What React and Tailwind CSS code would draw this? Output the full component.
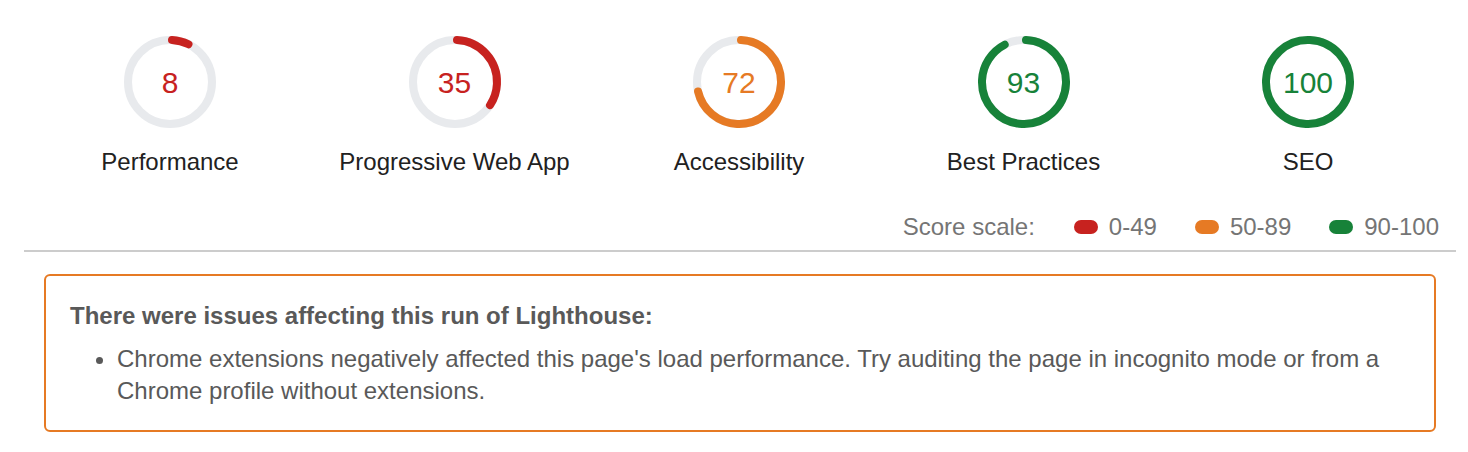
import React from "react";

const RED = "#c7221f";
const ORANGE = "#e67a24";
const GREEN = "#178239";

const gauges = [
  { score: 8, label: "Performance", color: RED },
  { score: 35, label: "Progressive Web App", color: RED },
  { score: 72, label: "Accessibility", color: ORANGE },
  { score: 93, label: "Best Practices", color: GREEN },
  { score: 100, label: "SEO", color: GREEN },
];

function Gauge({ score, label, color }) {
  const r = 42;
  const sw = 8;
  const C = 2 * Math.PI * r;
  const p = score / 100;
  const adj = ((0.25 * sw) / C) * 360;
  let len = p * C - sw / 2;
  if (p === 1) len = C;
  return (
    <div className="flex w-[284.5px] flex-col items-center">
      <div className="relative h-[96px] w-[96px]">
        <svg width="96" height="96" viewBox="0 0 96 96" className="block">
          <circle cx="48" cy="48" r={r} fill="none" stroke="#e8eaed" strokeWidth={sw} />
          <circle
            cx="48"
            cy="48"
            r={r}
            fill="none"
            stroke={color}
            strokeWidth={sw}
            strokeLinecap="round"
            strokeDasharray={`${Math.max(len, 0)} ${C}`}
            transform={`rotate(${-90 + adj} 48 48)`}
          />
        </svg>
        <div
          className="absolute inset-0 flex items-center justify-center pt-[1px] text-[30px] leading-none"
          style={{ color }}
        >
          {score}
        </div>
      </div>
      <div className="mt-[18px] whitespace-nowrap text-[24px] leading-[28px] text-[#212121]">
        {label}
      </div>
    </div>
  );
}

function Legend({ color, text }) {
  return (
    <div className="flex items-center">
      <span className="mr-[11px] inline-block h-[14px] w-[24px] rounded-[7px]" style={{ background: color }} />
      <span>{text}</span>
    </div>
  );
}

export default function App() {
  return (
    <div
      className="w-[1468px] bg-white pl-[24px] pr-[12px] pt-[34px]"
      style={{ fontFamily: '"Liberation Sans", Arial, sans-serif' }}
    >
      <div className="flex justify-center pr-[2px]">
        {gauges.map((g) => (
          <Gauge key={g.label} {...g} />
        ))}
      </div>
      <div className="mt-[37px] flex items-center justify-end gap-[38px] pr-[17px] text-[24px] leading-[28px] text-[#757575]">
        <span className="mr-[1px]">Score scale:</span>
        <Legend color={RED} text="0-49" />
        <Legend color={ORANGE} text="50-89" />
        <Legend color={GREEN} text="90-100" />
      </div>
      <div className="mt-[9px] h-[2px] bg-[#cccccc]" />
      <div className="mx-[20px] mt-[22px] rounded-[6px] border-2 border-[#e67a24] px-[24px] pb-[23px] pt-[24px] text-[24px] leading-[32px] text-[#595959]">
        <div className="font-bold">There were issues affecting this run of Lighthouse:</div>
        <ul className="mt-[11px] list-disc pl-[47px]">
          <li>
            Chrome extensions negatively affected this page's load performance. Try auditing the page in incognito mode or from a Chrome profile without extensions.
          </li>
        </ul>
      </div>
      <div className="h-[20px]" />
    </div>
  );
}
